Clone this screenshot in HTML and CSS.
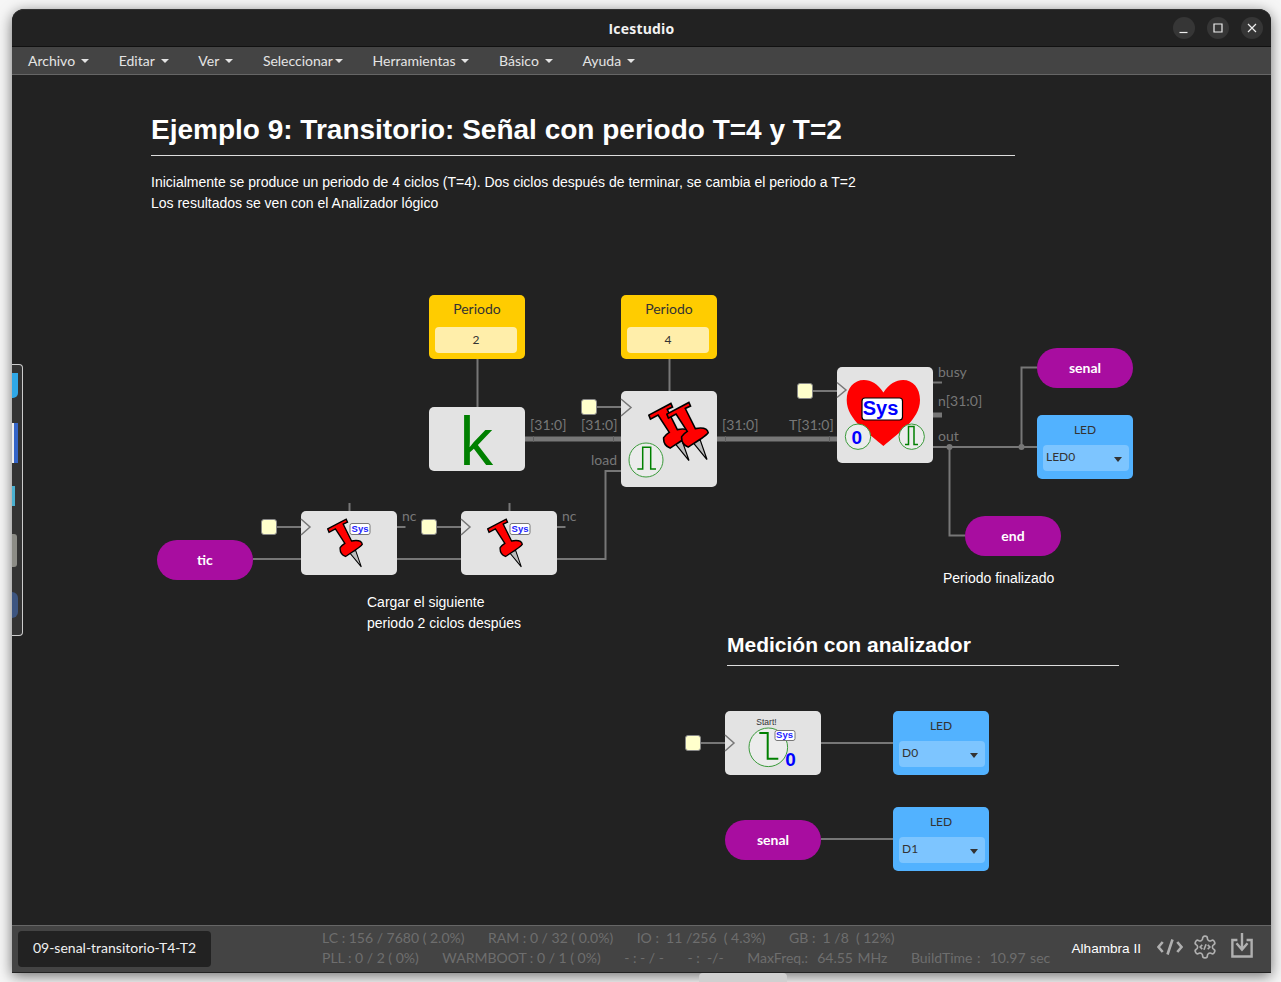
FILE: index.html
```html
<!DOCTYPE html>
<html lang="es">
<head>
    <meta charset="UTF-8">
    <meta name="viewport" content="width=device-width, initial-scale=1.0">
    <title>Icestudio</title>
    <link rel="stylesheet" href="styles.css">
</head>
<body>
    <!-- shared push-pin drawing, used by the three "Sys" blocks -->
    <svg class="defs">
        <symbol id="pin" viewBox="95 40 107 148">
            <path class="pin-needle" d="M160 140 L180 136 L197 185 Z"/>
            <path class="pin-head" d="M97 72 L152 43 L156 52 L143 58 L168 108 C185 105 198 108 200 118 C197 125 175 138 150 154 C140 150 133 140 134 128 C138 122 143 118 148 115 L120 72 L101 82 Z"/>
        </symbol>
    </svg>

    <div class="window">
        <header class="titlebar">
            <span class="app-title">Icestudio</span>
            <div class="win-buttons">
                <button class="win-btn"><svg viewBox="0 0 22 22"><path d="M6.5 15.5 H14.5"/></svg></button>
                <button class="win-btn"><svg viewBox="0 0 22 22"><path d="M7 7 H15 V15 H7 Z"/></svg></button>
                <button class="win-btn"><svg viewBox="0 0 22 22"><path d="M7 7 L15 15 M15 7 L7 15"/></svg></button>
            </div>
        </header>

        <nav class="menubar">
            <a class="menu-item">Archivo<i class="caret"></i></a>
            <a class="menu-item">Editar<i class="caret"></i></a>
            <a class="menu-item">Ver<i class="caret"></i></a>
            <a class="menu-item tight">Seleccionar<i class="caret"></i></a>
            <a class="menu-item">Herramientas<i class="caret"></i></a>
            <a class="menu-item">Básico<i class="caret"></i></a>
            <a class="menu-item">Ayuda<i class="caret"></i></a>
        </nav>

        <main class="canvas">
            <!-- wires use page coordinates through the viewBox -->
            <svg class="wires" viewBox="12 75 1259 850">
                <g class="wire">
                    <path d="M477.5 359 V407"/>
                    <path d="M669.5 359 V391"/>
                    <path d="M597 407 H621"/>
                    <path d="M813 391 H837"/>
                    <path d="M621 471 H605.5 V559 H557"/>
                    <path d="M253 559 H301"/>
                    <path d="M397 559 H461"/>
                    <path d="M277 527 H301"/>
                    <path d="M437 527 H461"/>
                    <path d="M397 527 H405.5"/>
                    <path d="M557 527 H565.5"/>
                    <path d="M349.5 503 V511"/>
                    <path d="M509.5 503 V511"/>
                    <path d="M933 382.5 H942"/>
                    <path d="M933 447 H1037"/>
                    <path d="M1021.5 447 V367.5 H1037"/>
                    <path d="M949.5 447 V535.5 H965"/>
                    <path d="M701 743 H725"/>
                    <path d="M821 743 H893"/>
                    <path d="M821 839 H893"/>
                </g>
                <g class="bus">
                    <path d="M525 439 H621"/>
                    <path d="M717 439 H837"/>
                    <path d="M933 415 H942"/>
                </g>
                <g class="bus-tick">
                    <path d="M533.5 436 V442"/>
                    <path d="M613.5 436 V442"/>
                    <path d="M725.5 436 V442"/>
                    <path d="M829.5 436 V442"/>
                </g>
                <circle class="joint" cx="949.5" cy="447" r="3"/>
                <circle class="joint" cx="1021.5" cy="447" r="3"/>
            </svg>

            <div class="dock">
                <span class="dock-icon d1"></span>
                <span class="dock-icon d2"></span>
                <span class="dock-icon d3"></span>
                <span class="dock-icon d4"></span>
                <span class="dock-icon d5"></span>
            </div>

            <div class="note note-head">
                <h1>Ejemplo 9: Transitorio: Señal con periodo T=4 y T=2</h1>
                <p>Inicialmente se produce un periodo de 4 ciclos (T=4). Dos ciclos después de terminar, se cambia el periodo a T=2<br>Los resultados se ven con el Analizador lógico</p>
            </div>
            <p class="note note-load">Cargar el siguiente<br>periodo 2 ciclos despúes</p>
            <p class="note note-end">Periodo finalizado</p>
            <h2 class="note note-measure">Medición con analizador</h2>

            <!-- constants -->
            <div class="node const n-const2">
                <span class="const-label">Periodo</span>
                <span class="const-value">2</span>
            </div>
            <div class="node const n-const4">
                <span class="const-label">Periodo</span>
                <span class="const-value">4</span>
            </div>

            <!-- grey blocks -->
            <div class="node block n-k"><span class="k-glyph">k</span></div>

            <div class="node block tall n-pins">
                <svg viewBox="621 391 96 96">
                    <path class="clk-arrow" d="M621 399 L631 407.5 L621 416"/>
                    <use href="#pin" x="648" y="402" width="43" height="60"/>
                    <use href="#pin" x="666" y="401" width="43" height="60"/>
                    <circle class="badge" cx="646" cy="460" r="17"/>
                    <path class="pulse" d="M637.3 469 H642.7 V447.3 H650.7 V469 H656"/>
                </svg>
            </div>

            <div class="node block tall n-heart">
                <svg viewBox="837 367 96 96">
                    <path class="clk-arrow" d="M837 382.5 L846 390 L837 397.5"/>
                    <path class="heart" d="M883.4 392.5 C878 384 871 380 864 380 C854 380 846.7 388 846.7 400 C846.7 420 870 434 883.4 446 C897 434 920 420 920 400 C920 388 913 380 903 380 C896 380 889 384 883.4 392.5 Z"/>
                    <rect class="sys-box big" x="862" y="398" width="40.5" height="22" rx="3"/>
                    <text class="sys-text big" x="880.5" y="415">Sys</text>
                    <circle class="badge" cx="858" cy="436.7" r="12.7"/>
                    <text class="zero" x="856.8" y="443.5">0</text>
                    <circle class="badge" cx="911.7" cy="436.7" r="12.7"/>
                    <path class="pulse" d="M905 444.5 H908.5 V426.5 H914 V444.5 H918"/>
                </svg>
            </div>

            <div class="node block n-pin1">
                <svg viewBox="301 511 96 64">
                    <path class="clk-arrow" d="M301 519 L310 527 L301 535"/>
                    <use href="#pin" x="327" y="518" width="36" height="50"/>
                    <rect class="sys-box" x="350" y="523.5" width="20" height="11" rx="2"/>
                    <text class="sys-text" x="360" y="532">Sys</text>
                </svg>
            </div>
            <div class="node block n-pin2">
                <svg viewBox="461 511 96 64">
                    <path class="clk-arrow" d="M461 519 L470 527 L461 535"/>
                    <use href="#pin" x="487" y="518" width="36" height="50"/>
                    <rect class="sys-box" x="510" y="523.5" width="20" height="11" rx="2"/>
                    <text class="sys-text" x="520" y="532">Sys</text>
                </svg>
            </div>

            <div class="node block n-start">
                <svg viewBox="725 711 96 64">
                    <path class="clk-arrow" d="M725 735 L734 743 L725 751"/>
                    <text class="start-text" x="766.5" y="725">Start!</text>
                    <circle class="badge" cx="768.3" cy="747.3" r="19.3"/>
                    <path class="pulse thick" d="M759.3 733 H767.7 V758.7 H778.3"/>
                    <rect class="sys-box" x="775" y="730.5" width="20" height="10" rx="2"/>
                    <text class="sys-text" x="784.5" y="738.2">Sys</text>
                    <text class="zero" x="790.5" y="766">0</text>
                </svg>
            </div>

            <!-- clock inputs -->
            <span class="node clk c-a"></span>
            <span class="node clk c-b"></span>
            <span class="node clk c-c"></span>
            <span class="node clk c-d"></span>
            <span class="node clk c-e"></span>

            <!-- labels of ports -->
            <span class="port p-bus1">[31:0]</span>
            <span class="port p-bus2">[31:0]</span>
            <span class="port p-bus3">[31:0]</span>
            <span class="port p-t">T[31:0]</span>
            <span class="port p-load">load</span>
            <span class="port p-busy">busy</span>
            <span class="port p-n">n[31:0]</span>
            <span class="port p-out">out</span>
            <span class="port p-nc1">nc</span>
            <span class="port p-nc2">nc</span>

            <!-- pins -->
            <div class="node pill n-senal">senal</div>
            <div class="node pill n-end">end</div>
            <div class="node pill n-tic">tic</div>
            <div class="node pill n-senal2">senal</div>

            <div class="node led n-led0">
                <span class="led-label">LED</span>
                <div class="led-select">LED0<i class="led-caret"></i></div>
            </div>
            <div class="node led n-d0">
                <span class="led-label">LED</span>
                <div class="led-select">D0<i class="led-caret"></i></div>
            </div>
            <div class="node led n-d1">
                <span class="led-label">LED</span>
                <div class="led-select">D1<i class="led-caret"></i></div>
            </div>
        </main>

        <footer class="footer">
            <div class="file-tag">09-senal-transitorio-T4-T2</div>
            <div class="stats">
                <div class="stats-row">
                    <span>LC : 156 / 7680 ( 2.0%)</span>
                    <span>RAM : 0 / 32 ( 0.0%)</span>
                    <span>IO :&nbsp; 11 /256 &nbsp;( 4.3%)</span>
                    <span>GB :&nbsp; 1 /8 &nbsp;( 12%)</span>
                </div>
                <div class="stats-row">
                    <span>PLL : 0 / 2 ( 0%)</span>
                    <span>WARMBOOT : 0 / 1 ( 0%)</span>
                    <span>- : - / -</span>
                    <span>- : &nbsp;-/-</span>
                    <span class="wide">MaxFreq.: &nbsp;64.55 MHz</span>
                    <span class="wide">BuildTime : &nbsp;10.97 sec</span>
                </div>
            </div>
            <div class="footer-right">
                <span class="board">Alhambra II</span>
                <svg class="tool code" viewBox="0 0 26 24"><path d="M5.7 7 L1.5 12 L5.7 17 M15.5 4.5 L10.5 19.5 M20.3 7 L24.5 12 L20.3 17"/></svg>
                <svg class="tool gear" viewBox="0 0 24 24">
                    <path d="M12.22 2h-.44a2 2 0 0 0-2 2v.18a2 2 0 0 1-1 1.73l-.43.25a2 2 0 0 1-2 0l-.15-.08a2 2 0 0 0-2.73.73l-.22.38a2 2 0 0 0 .73 2.73l.15.1a2 2 0 0 1 1 1.72v.51a2 2 0 0 1-1 1.74l-.15.09a2 2 0 0 0-.73 2.73l.22.38a2 2 0 0 0 2.73.73l.15-.08a2 2 0 0 1 2 0l.43.25a2 2 0 0 1 1 1.73V20a2 2 0 0 0 2 2h.44a2 2 0 0 0 2-2v-.18a2 2 0 0 1 1-1.73l.43-.25a2 2 0 0 1 2 0l.15.08a2 2 0 0 0 2.73-.73l.22-.39a2 2 0 0 0-.73-2.73l-.15-.08a2 2 0 0 1-1-1.74v-.5a2 2 0 0 1 1-1.74l.15-.09a2 2 0 0 0 .73-2.73l-.22-.38a2 2 0 0 0-2.73-.73l-.15.08a2 2 0 0 1-2 0l-.43-.25a2 2 0 0 1-1-1.73V4a2 2 0 0 0-2-2z"/>
                    <path d="M9.5 10 L7.5 12 L9.5 14 M13 9.5 L11 14.5 M14.5 10 L16.5 12 L14.5 14"/>
                </svg>
                <svg class="tool save" viewBox="0 0 24 28"><path class="save-box" d="M7 8.5 H1.5 V26.5 H22.5 V8.5 H17"/><path class="save-arrow" d="M12 1 V18 M6 12 L12 19 L18 12"/></svg>
            </div>
        </footer>
    </div>
    <div class="handle"></div>
</body>
</html>
```

FILE: styles.css
```css
* {
    box-sizing: border-box;
}
body {
    margin: 0;
    height: 982px;
    overflow: hidden;
    background-color: #f6f6f6;
    font-family: Lato, sans-serif;
    position: relative;
}
.defs {
    position: absolute;
    width: 0;
    height: 0;
}
.window {
    margin: 9px 0 0 12px;
    width: 1259px;
    height: 964px;
    display: flex;
    flex-direction: column;
    background-color: #222;
    border-radius: 12px 12px 0 0;
    box-shadow: 0 3px 14px rgba(0, 0, 0, 0.55);
}
.handle {
    position: absolute;
    left: 699px;
    top: 973px;
    width: 88px;
    height: 9px;
    background-color: #d0d0d0;
    border-radius: 4px 4px 0 0;
}

/* title bar */
.titlebar {
    flex: 0 0 38px;
    display: flex;
    align-items: center;
    justify-content: center;
    position: relative;
    background-color: #222;
    border-top: 1px solid #333;
    border-bottom: 1px solid #111;
    border-radius: 12px 12px 0 0;
}
.app-title {
    font-family: "Open Sans", sans-serif;
    font-size: 14px;
    font-weight: 700;
    color: #f2f2f2;
    letter-spacing: 0.2px;
}
.win-buttons {
    position: absolute;
    right: 8px;
    top: 7px;
    display: flex;
    gap: 12px;
}
.win-btn {
    width: 22px;
    height: 22px;
    padding: 0;
    border: none;
    border-radius: 50%;
    background-color: #363636;
}
.win-btn svg {
    display: block;
    fill: none;
    stroke: #eee;
    stroke-width: 1.2;
}

/* menu */
.menubar {
    flex: 0 0 28px;
    display: flex;
    align-items: center;
    padding-left: 1px;
    background-color: #444;
    border-bottom: 1px solid #666;
}
.menu-item {
    padding: 0 14.6px 0 15px;
    font-size: 14px;
    color: #e4e4e4;
    display: flex;
    align-items: center;
}
.caret {
    margin-left: 6px;
    border-top: 4px solid #e4e4e4;
    border-left: 4px solid transparent;
    border-right: 4px solid transparent;
}
.tight .caret {
    margin-left: 2px;
}

/* canvas, the free area where the diagram nodes sit */
.canvas {
    flex: 1;
    position: relative;
    background-color: #222;
}
.wires {
    position: absolute;
    left: 0;
    top: 0;
    width: 1259px;
    height: 850px;
}
.wire path {
    fill: none;
    stroke: #777;
    stroke-width: 2;
}
.bus path {
    fill: none;
    stroke: #777;
    stroke-width: 5;
}
.bus-tick path {
    fill: none;
    stroke: #5e5e5e;
    stroke-width: 1;
}
.joint {
    fill: #777;
}

.dock {
    position: absolute;
    left: 0;
    top: 289px;
    width: 11px;
    height: 272px;
    background-color: #333;
    border: 1px solid #ccc;
    border-left: none;
    border-radius: 0 4px 4px 0;
    display: flex;
    flex-direction: column;
    align-items: flex-start;
}
.dock-icon {
    display: block;
}
.d1 {
    margin-top: 8px;
    width: 6px;
    height: 25px;
    background-color: #2fa8e8;
    border-radius: 0 0 5px 0;
}
.d2 {
    margin-top: 25px;
    width: 6px;
    height: 40px;
    background-color: #3565c8;
    border-left: 2px solid #eee;
}
.d3 {
    margin-top: 23px;
    width: 3px;
    height: 20px;
    background-color: #4ab0d0;
}
.d4 {
    margin-top: 28px;
    width: 5px;
    height: 33px;
    background-color: #8c8c86;
    border-radius: 0 3px 3px 0;
}
.d5 {
    margin-top: 25px;
    width: 6px;
    height: 26px;
    background-color: #3d5580;
    border-radius: 0 6px 6px 0;
}

.note {
    position: absolute;
    margin: 0;
    font-family: "Liberation Sans", Arial, sans-serif;
    font-size: 14px;
    line-height: 21px;
    color: #fff;
}
.note-head {
    left: 139px;
    top: 37px;
    width: 864px;
}
.note-head h1 {
    margin: 0 0 16px;
    padding-bottom: 7px;
    font-size: 28px;
    line-height: 36px;
    border-bottom: 1px solid #ddd;
}
.note-head p {
    margin: 0;
}
.note-load {
    left: 355px;
    top: 517px;
}
.note-end {
    left: 931px;
    top: 493px;
}
.note-measure {
    left: 715px;
    top: 556px;
    width: 392px;
    padding-bottom: 6px;
    font-size: 21px;
    line-height: 28px;
    border-bottom: 1px solid #ddd;
}

.node {
    position: absolute;
    width: 96px;
    height: 64px;
    border-radius: 5px;
}
.node svg {
    display: block;
    width: 100%;
    height: 100%;
    overflow: visible;
}
.block {
    background-color: #e3e3e3;
}
.tall {
    height: 96px;
}

/* constants */
.const {
    background-color: #fc0;
    display: flex;
    flex-direction: column;
    align-items: center;
    padding: 5px 8px 0 6px;
    color: #333;
}
.const-label {
    font-size: 14px;
    line-height: 17px;
    margin-left: 2px;
}
.const-value {
    margin-top: 10px;
    width: 100%;
    height: 26px;
    line-height: 25px;
    text-align: center;
    font-size: 12px;
    background-color: #fea;
    border-radius: 4px;
}
.n-const2 { left: 417px; top: 220px; }
.n-const4 { left: 609px; top: 220px; }
.n-k {
    left: 417px;
    top: 332px;
    text-align: center;
}
.k-glyph {
    font-family: "Noto Sans", sans-serif;
    font-size: 66px;
    line-height: 64px;
    color: #008000;
    margin-left: -2px;
    display: block;
}
.n-pins { left: 609px; top: 316px; }
.n-heart { left: 825px; top: 292px; }
.n-pin1 { left: 289px; top: 436px; }
.n-pin2 { left: 449px; top: 436px; }
.n-start { left: 713px; top: 636px; }

.clk-arrow {
    fill: none;
    stroke: #777;
    stroke-width: 1.5;
}
.pin-needle {
    fill: #bdbdbd;
    stroke: #000;
    stroke-width: 3;
}
.pin-head {
    fill: #f00;
    stroke: #000;
    stroke-width: 4;
}
.badge {
    fill: #ececec;
    stroke: #3a9a3a;
    stroke-width: 1;
}
.pulse {
    fill: none;
    stroke: #008000;
    stroke-width: 1.5;
}
.pulse.thick {
    stroke-width: 2;
}
.heart {
    fill: #f00;
}
.sys-box {
    fill: #fff;
    stroke: #777;
    stroke-width: 1;
}
.sys-box.big {
    stroke: #000;
    stroke-width: 1.2;
}
.sys-text {
    font-family: "Liberation Sans", sans-serif;
    font-size: 9.5px;
    font-weight: 700;
    fill: #2222ff;
    text-anchor: middle;
}
.sys-text.big {
    font-size: 20px;
    fill: #0000ff;
}
.zero {
    font-family: "Liberation Sans", sans-serif;
    font-size: 19px;
    font-weight: 700;
    fill: #0000ff;
    text-anchor: middle;
}
.start-text {
    font-family: "Liberation Sans", sans-serif;
    font-size: 8.5px;
    fill: #333;
    text-anchor: middle;
}

.clk {
    width: 16px;
    height: 16px;
    background-color: #ffc;
    border: 1px solid #888;
    border-radius: 3px;
}
.c-a { left: 569px; top: 324px; }
.c-b { left: 785px; top: 308px; }
.c-c { left: 249px; top: 444px; }
.c-d { left: 409px; top: 444px; }
.c-e { left: 673px; top: 660px; }

.port {
    position: absolute;
    font-size: 14px;
    line-height: 16px;
    color: #777;
}
.p-bus1 { left: 518px; top: 342px; }
.p-bus2 { left: 569px; top: 342px; }
.p-bus3 { left: 710px; top: 342px; }
.p-t { left: 777px; top: 342px; }
.p-load { left: 579px; top: 377px; }
.p-busy { left: 926px; top: 289px; }
.p-n { left: 926px; top: 318px; }
.p-out { left: 926px; top: 353px; }
.p-nc1 { left: 390px; top: 433px; }
.p-nc2 { left: 550px; top: 433px; }

.pill {
    height: 40px;
    border-radius: 20px;
    background-color: #a80da0;
    color: #fff;
    font-size: 14px;
    font-weight: 700;
    line-height: 40px;
    text-align: center;
}
.n-senal { left: 1025px; top: 273px; }
.n-end { left: 953px; top: 441px; }
.n-tic { left: 145px; top: 465px; }
.n-senal2 { left: 713px; top: 745px; }

.led {
    background-color: #52b2ff;
    display: flex;
    flex-direction: column;
    align-items: center;
    padding: 7px 4px 0 6px;
    color: #333;
}
.led-label {
    font-size: 12px;
    line-height: 15px;
    margin-right: 2px;
}
.led-select {
    margin-top: 8px;
    width: 100%;
    height: 26px;
    padding-left: 3px;
    font-size: 12px;
    line-height: 24px;
    background-color: #7dc5ff;
    border-radius: 4px;
    position: relative;
}
.led-caret {
    position: absolute;
    right: 7px;
    top: 12px;
    border-top: 5px solid #333;
    border-left: 4px solid transparent;
    border-right: 4px solid transparent;
}
.n-led0 { left: 1025px; top: 340px; }
.n-d0 { left: 881px; top: 636px; }
.n-d1 { left: 881px; top: 732px; }

/* footer */
.footer {
    flex: 0 0 48px;
    display: flex;
    align-items: center;
    padding: 0 18px 0 6px;
    background-color: #444;
    border-top: 1px solid #666;
    border-bottom: 1px solid #222;
}
.file-tag {
    width: 193px;
    height: 36px;
    line-height: 34px;
    text-align: center;
    font-size: 14px;
    color: #f0f0f0;
    background-color: #222;
    border-radius: 4px;
}
.stats {
    margin-left: 111px;
    margin-bottom: 2px;
    font-size: 14px;
    line-height: 20px;
    color: #6e6e6e;
}
.stats-row {
    display: flex;
    gap: 23.5px;
    white-space: nowrap;
}
.wide {
    word-spacing: 1px;
}
.footer-right {
    margin-left: auto;
    display: flex;
    align-items: center;
}
.board {
    font-family: "Liberation Sans", sans-serif;
    font-size: 13.6px;
    color: #fff;
    margin-right: 16px;
    margin-bottom: 2px;
}
.tool {
    fill: none;
    stroke: #b0b0b0;
    stroke-width: 2.2;
    margin-bottom: 5px;
}
.code {
    width: 26px;
    height: 24px;
    margin-right: 9px;
    stroke-width: 2.6;
}
.gear {
    width: 26px;
    height: 26px;
    stroke-width: 1.5;
    margin-right: 13px;
}
.save {
    width: 22px;
    height: 28px;
    margin-bottom: 8px;
    stroke-width: 2.6;
}
```
